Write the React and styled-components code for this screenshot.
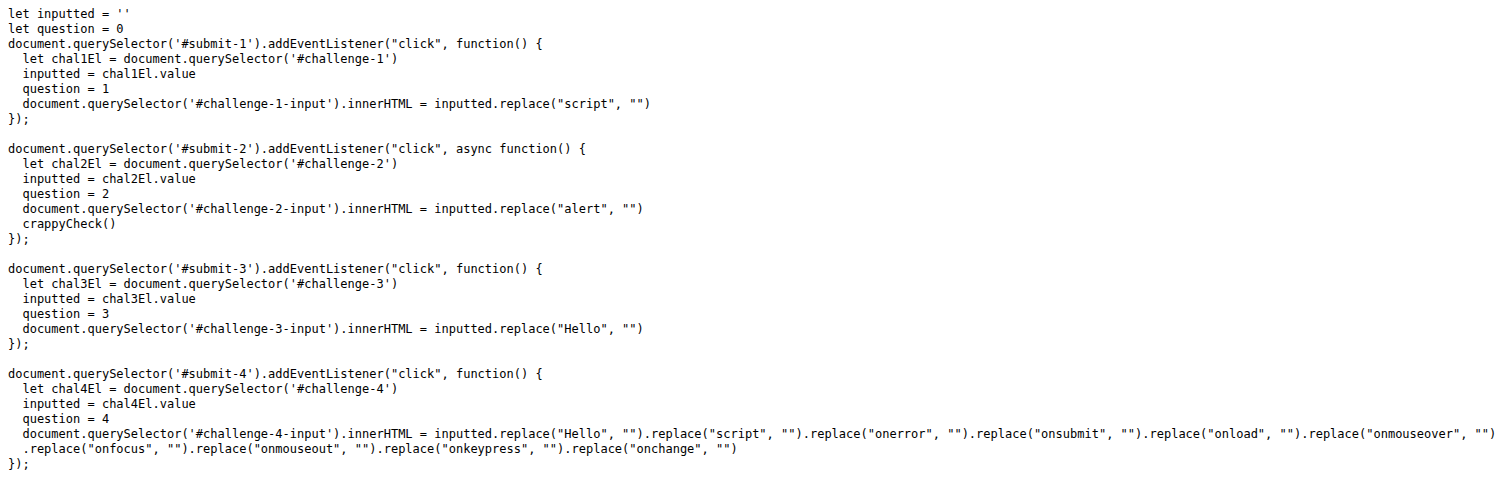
import React from 'react'
import styled, { createGlobalStyle } from 'styled-components';

const GlobalStyle = createGlobalStyle`
  html, body {
    margin: 0;
    padding: 0;
    background: #ffffff;
  }
`;

const source = `let inputted = ''
let question = 0
document.querySelector('#submit-1').addEventListener("click", function() {
  let chal1El = document.querySelector('#challenge-1')
  inputted = chal1El.value
  question = 1
  document.querySelector('#challenge-1-input').innerHTML = inputted.replace("script", "")
});

document.querySelector('#submit-2').addEventListener("click", async function() {
  let chal2El = document.querySelector('#challenge-2')
  inputted = chal2El.value
  question = 2
  document.querySelector('#challenge-2-input').innerHTML = inputted.replace("alert", "")
  crappyCheck()
});

document.querySelector('#submit-3').addEventListener("click", function() {
  let chal3El = document.querySelector('#challenge-3')
  inputted = chal3El.value
  question = 3
  document.querySelector('#challenge-3-input').innerHTML = inputted.replace("Hello", "")
});

document.querySelector('#submit-4').addEventListener("click", function() {
  let chal4El = document.querySelector('#challenge-4')
  inputted = chal4El.value
  question = 4
  document.querySelector('#challenge-4-input').innerHTML = inputted.replace("Hello", "").replace("script", "").replace("onerror", "").replace("onsubmit", "").replace("onload", "").replace("onmouseover", "")
  .replace("onfocus", "").replace("onmouseout", "").replace("onkeypress", "").replace("onchange", "")
});`;

function App() {
    return (
        <Page>
            <GlobalStyle />
            <Code>{source}</Code>
        </Page>
    )
}

const Page = styled.div`
  padding: 7px 8px 8px 8px;
`;

const Code = styled.pre`
  margin: 0;
  font-family: "DejaVu Sans Mono", monospace;
  font-size: 12px;
  line-height: 15px;
  color: #000000;
  white-space: pre;
`;

export default App
